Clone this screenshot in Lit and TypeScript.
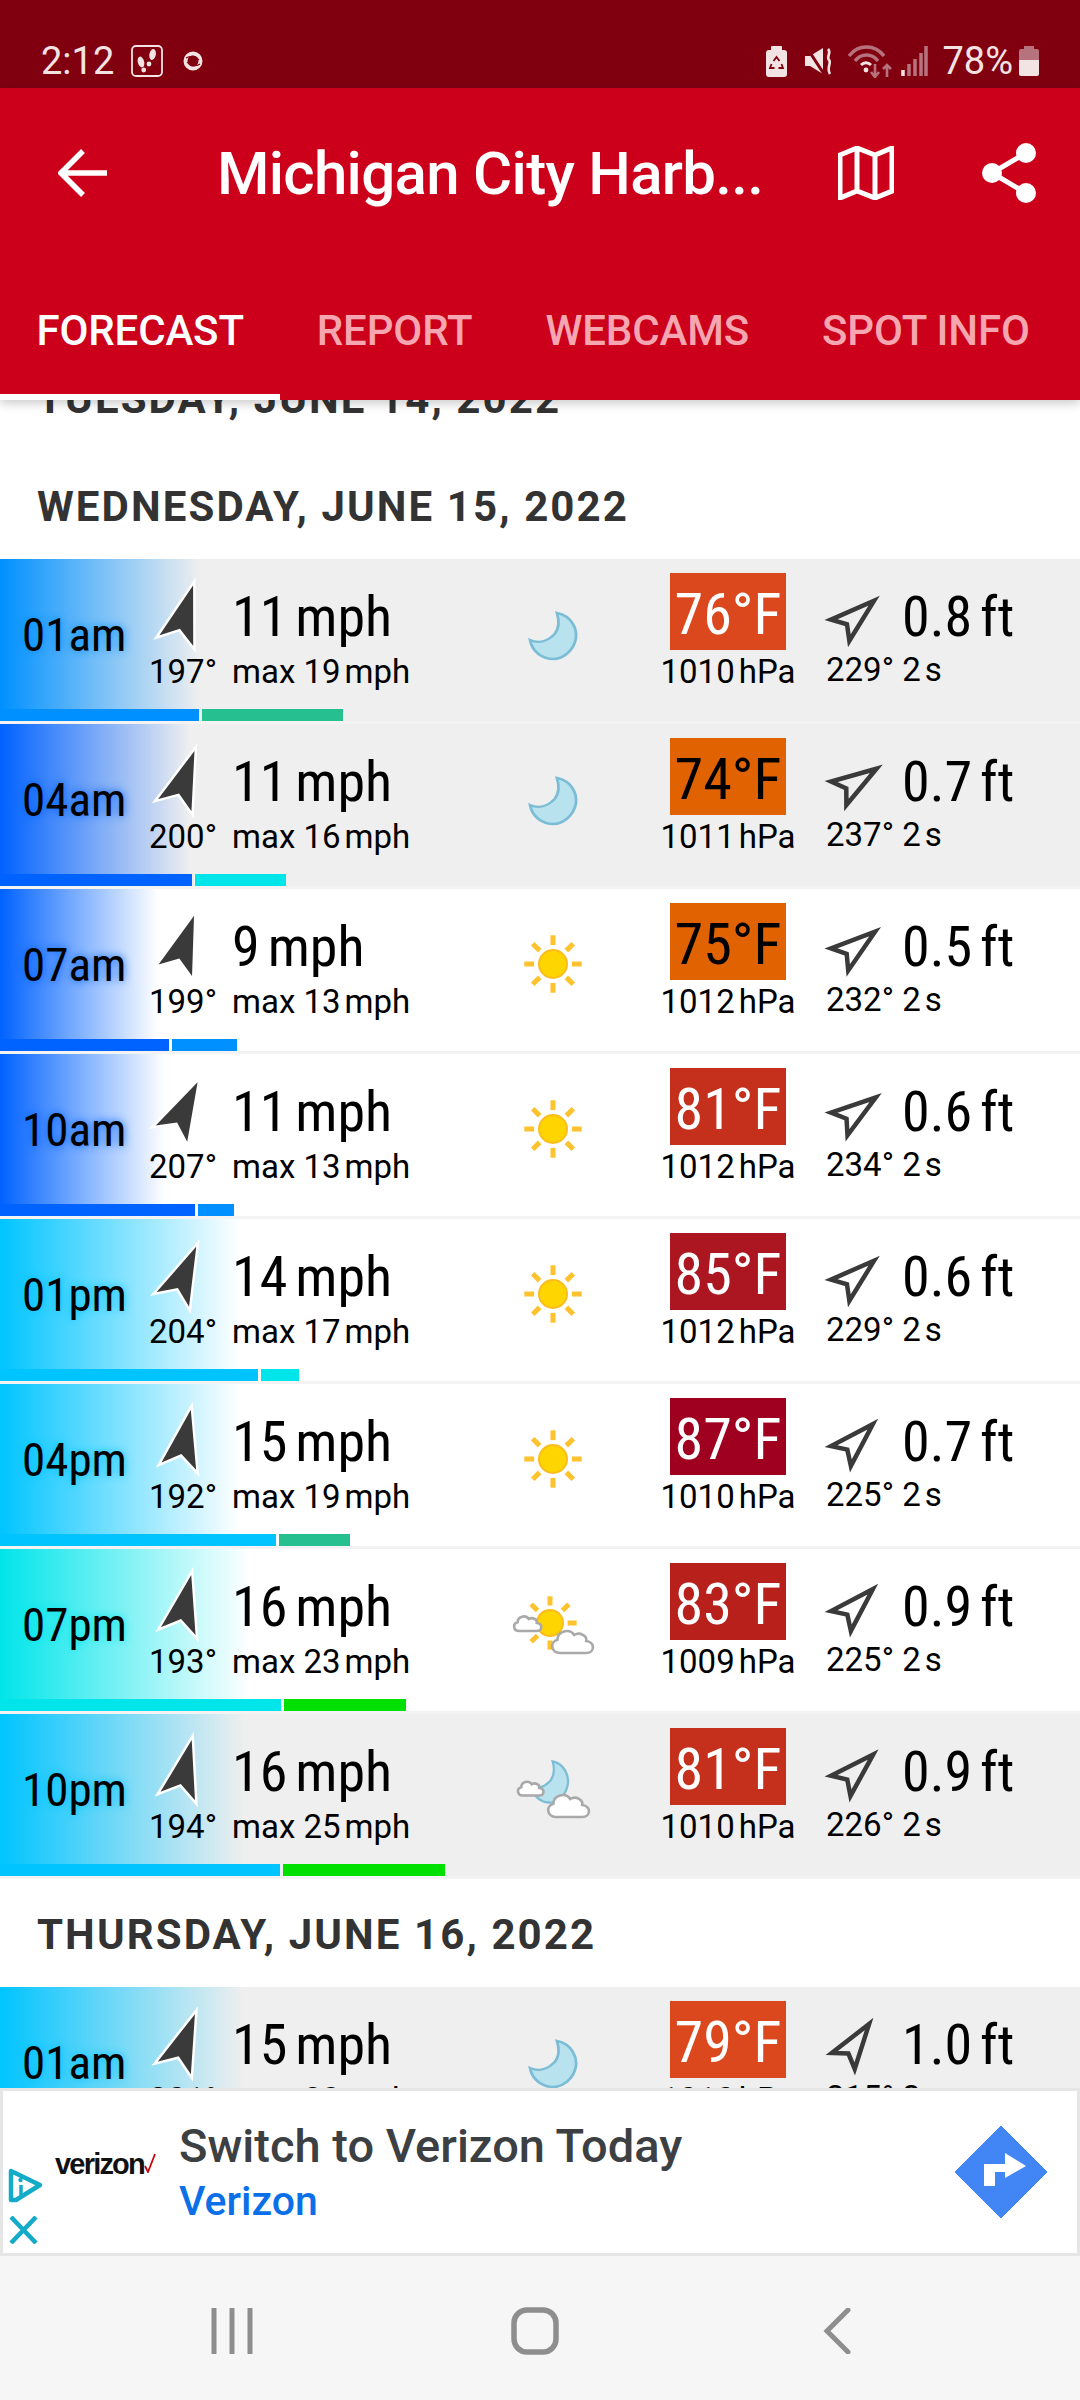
import { LitElement, html, svg, css } from 'lit';
import { customElement } from 'lit/decorators.js';

type Sky = 'moon' | 'sun' | 'sun-cloud' | 'moon-cloud';

interface Row {
  time: string;
  dir: number;
  speed: number;
  gust: number;
  sky: Sky;
  temp: number;
  tempBg: string;
  tempDark?: boolean;
  hpa: number;
  wave: string;
  waveDir: number;
  period: number;
  color: string;
  gustColor: string;
  bar: number;
  gustEnd: number;
  fade: number;
  grey?: boolean;
}

const BLUE = '#0090ff';
const DEEP = '#0062ff';
const SKY = '#00c4ff';
const AQUA = '#00e5ea';
const TEAL = '#26bf8f';
const GREEN = '#00e000';

const WEDNESDAY: Row[] = [
  { time: '01am', dir: 197, speed: 11, gust: 19, sky: 'moon', temp: 76, tempBg: '#db481d', hpa: 1010, wave: '0.8', waveDir: 229, period: 2, color: BLUE, gustColor: TEAL, bar: 199, gustEnd: 343, fade: 200, grey: true },
  { time: '04am', dir: 200, speed: 11, gust: 16, sky: 'moon', temp: 74, tempBg: '#e16200', tempDark: true, hpa: 1011, wave: '0.7', waveDir: 237, period: 2, color: DEEP, gustColor: AQUA, bar: 192, gustEnd: 286, fade: 190, grey: true },
  { time: '07am', dir: 199, speed: 9, gust: 13, sky: 'sun', temp: 75, tempBg: '#e16200', tempDark: true, hpa: 1012, wave: '0.5', waveDir: 232, period: 2, color: DEEP, gustColor: BLUE, bar: 169, gustEnd: 237, fade: 158, grey: false },
  { time: '10am', dir: 207, speed: 11, gust: 13, sky: 'sun', temp: 81, tempBg: '#c4301c', hpa: 1012, wave: '0.6', waveDir: 234, period: 2, color: DEEP, gustColor: BLUE, bar: 195, gustEnd: 234, fade: 165, grey: false },
  { time: '01pm', dir: 204, speed: 14, gust: 17, sky: 'sun', temp: 85, tempBg: '#ac1620', hpa: 1012, wave: '0.6', waveDir: 229, period: 2, color: SKY, gustColor: AQUA, bar: 258, gustEnd: 299, fade: 240, grey: false },
  { time: '04pm', dir: 192, speed: 15, gust: 19, sky: 'sun', temp: 87, tempBg: '#a00020', hpa: 1010, wave: '0.7', waveDir: 225, period: 2, color: SKY, gustColor: TEAL, bar: 276, gustEnd: 350, fade: 240, grey: false },
  { time: '07pm', dir: 193, speed: 16, gust: 23, sky: 'sun-cloud', temp: 83, tempBg: '#b8201c', hpa: 1009, wave: '0.9', waveDir: 225, period: 2, color: AQUA, gustColor: GREEN, bar: 281, gustEnd: 406, fade: 250, grey: false },
  { time: '10pm', dir: 194, speed: 16, gust: 25, sky: 'moon-cloud', temp: 81, tempBg: '#c4301c', hpa: 1010, wave: '0.9', waveDir: 226, period: 2, color: SKY, gustColor: GREEN, bar: 280, gustEnd: 445, fade: 245, grey: true },
];

const THURSDAY: Row[] = [
  { time: '01am', dir: 201, speed: 15, gust: 23, sky: 'moon', temp: 79, tempBg: '#db481d', hpa: 1010, wave: '1.0', waveDir: 215, period: 3, color: SKY, gustColor: GREEN, bar: 276, gustEnd: 400, fade: 244, grey: true },
];

const MOON_PATH = 'M44 17C58 20 62 34 61 42C59 56 48 63 41 63C31 63 22 56 20 44C28 48 36 45 42 38C47 31 46 24 44 17Z';

function moon(transform: string) {
  return svg`<path transform=${transform} d=${MOON_PATH} fill="#b9e2ef" stroke="#7cbdd6" stroke-width="2.5"/>`;
}

function sun(cx: number, cy: number, r: number) {
  const rays = [0, 45, 90, 135, 180, 225, 270, 315];
  return svg`
    ${rays.map(
      (a) => svg`<rect x=${cx - 2.5} y=${cy - r * 2.05} width="5" height=${r * 0.7} fill="#fdc22d" transform="rotate(${a} ${cx} ${cy})"/>`
    )}
    <circle cx=${cx} cy=${cy} r=${r} fill="#ffd500" stroke="#fbbc1e" stroke-width="2"/>`;
}

function cloud(x: number, y: number, scale: number) {
  return svg`<path transform="translate(${x} ${y}) scale(${scale})" d="M-11 10C-18 10 -20 1 -13 -1C-13 -8 -3 -11 1 -5C6 -8 12 -4 11 0C19 1 18 10 11 10Z" fill="#fff" stroke="#a9a9a9" stroke-width=${2.6 / scale}/>`;
}

function skyIcon(kind: Sky) {
  let body;
  if (kind === 'moon') body = moon('translate(50 40) scale(1.12 1) translate(-40.5 -40)');
  else if (kind === 'sun') body = sun(50, 38, 14);
  else if (kind === 'sun-cloud') body = svg`${sun(47, 37, 13)}${cloud(25, 37, 0.8)}${cloud(70, 55, 1.2)}`;
  else body = svg`${moon('translate(10 -5) scale(.9)')}${cloud(28, 37, 0.75)}${cloud(66, 54, 1.2)}`;
  return html`<svg class="sky" viewBox="0 0 100 80" width="100" height="80">${body}</svg>`;
}

@customElement('app-root')
export class AppRoot extends LitElement {
  static styles = css`
    :host {
      display: flex;
      flex-direction: column;
      width: 1080px;
      height: 2400px;
      overflow: hidden;
      background: #fff;
      font-family: Roboto, 'Noto Sans', sans-serif;
      color: #000;
    }

    .narrow { font-stretch: 75%; }

    .status {
      height: 88px;
      flex: none;
      box-sizing: border-box;
      background: #800010;
      color: #f3e4e4;
      display: flex;
      align-items: center;
      padding: 34px 41px 0 41px;
      font-size: 38px;
      line-height: 44px;
    }
    .status svg { display: block; flex: none; }
    .status .left { display: flex; align-items: center; }
    .status .right { margin-left: auto; display: flex; align-items: center; }
    .foot { margin-left: 17px; }
    .ring { margin-left: 20px; }
    .mute { margin-left: 18px; }
    .wifi { margin-left: 15px; }
    .bars-signal { margin-left: 9px; }
    .pct { margin-left: 14px; }
    .batt { margin-left: 6px; }

    .appbar {
      flex: none;
      height: 312px;
      background: #cc001b;
      color: #fff;
      display: flex;
      flex-direction: column;
      position: relative;
      z-index: 2;
      box-shadow: 0 3px 10px rgba(0, 0, 0, 0.22);
    }
    .toolbar {
      height: 170px;
      flex: none;
      display: flex;
      align-items: center;
      padding: 0 44px 0 58px;
      box-sizing: border-box;
    }
    .title {
      margin-left: 109px;
      font-size: 60px;
      font-weight: 500;
      letter-spacing: -0.7px;
      white-space: nowrap;
      width: 545px;
    }
    .toolbar .map { margin-left: 76px; flex: none; }
    .toolbar .share { margin-left: 88px; flex: none; }
    .tabs { display: flex; height: 142px; }
    .tab {
      padding: 48px 36.5px 0;
      font-size: 42px;
      line-height: 50px;
      font-weight: 500;
      letter-spacing: -0.15px;
      color: #f5a6b0;
      box-sizing: border-box;
      white-space: nowrap;
    }
    .tab.on { color: #fff; border-bottom: 6px solid #fff; }

    .list { flex: 1; min-height: 0; overflow: hidden; }
    .scroll { margin-top: -57px; }

    .day {
      height: 108px;
      box-sizing: border-box;
      padding: 31px 0 0 37px;
      font-size: 42px;
      line-height: 50px;
      font-weight: 700;
      letter-spacing: 2.1px;
      color: #333;
    }

    .row {
      height: 165px;
      box-sizing: border-box;
      border-bottom: 3px solid #f3f3f3;
      position: relative;
      display: grid;
      grid-template-columns: 150px 82px 244px 154px 196px 1fr;
      grid-template-rows: 77px 1fr;
      padding-top: 14px;
      background-repeat: no-repeat;
    }
    .row.grey { background-color: #efefef; }

    .time {
      grid-row: 1 / 3;
      align-self: center;
      margin-top: -24px;
      padding-left: 22px;
      font-size: 47px;
      line-height: 60px;
    }
    .dir { display: flex; align-items: center; }
    .dir svg { margin-left: -10px; flex: none; }
    .speed { font-size: 56px; line-height: 77px; padding-top: 6px; white-space: nowrap; }
    .unit { margin-left: 8px; }
    .sky-cell { grid-row: 1 / 3; grid-column: 4; align-self: center; justify-self: center; margin-top: -22px; }
    .sky { display: block; }
    .temp {
      grid-column: 5;
      justify-self: center;
      width: 116px;
      height: 77px;
      text-align: center;
      font-size: 58px;
      line-height: 77px;
      padding-top: 3px;
      box-sizing: border-box;
      color: #fff;
    }
    .temp.dark { color: #000; }
    .wave { grid-column: 6; display: flex; align-items: center; font-size: 56px; white-space: nowrap; }
    .wave svg { margin-left: -3px; margin-top: 14px; flex: none; }
    .wave .height { margin-left: 19px; padding-top: 10px; }
    .wave .ft { margin-left: 8px; }
    .sub {
      font-size: 33px;
      line-height: 40px;
      margin-top: 2px;
      white-space: nowrap;
    }
    .sub.center { text-align: center; grid-column: 5; }
    .sub.dir-text { grid-column: 2; margin-left: -1px; }
    .sub.max { grid-column: 3; }
    .sub.wave-text { grid-column: 6; margin-top: 0; }
    .thin { margin-left: 4px; }

    .bars {
      position: absolute;
      left: 0;
      bottom: 0;
      height: 12px;
      display: flex;
      gap: 3px;
    }
    .bars i { display: block; height: 12px; }

    .ad {
      flex: none;
      height: 168px;
      box-sizing: border-box;
      border: 3px solid #e6e6e6;
      background: #fff;
      display: flex;
      position: relative;
      z-index: 1;
    }
    .adchoice {
      width: 52px;
      flex: none;
      display: flex;
      flex-direction: column;
      justify-content: flex-end;
      padding: 0 0 9px 5px;
      box-sizing: border-box;
      gap: 12px;
    }
    .vz {
      width: 124px;
      flex: none;
      padding-top: 57px;
      box-sizing: border-box;
      display: flex;
      font-family: 'Liberation Sans', Arial, sans-serif;
      font-size: 29px;
      font-weight: 700;
      letter-spacing: -1.8px;
      color: #111;
    }
    .vz svg { margin-top: 5px; flex: none; }
    .adtext { flex: 1; padding-top: 27px; white-space: nowrap; }
    .adtitle { font-size: 47px; line-height: 56px; font-weight: 500; color: #3c4043; }
    .adsub { font-size: 41px; line-height: 48px; font-weight: 500; color: #0b6fe8; margin-top: 3px; }
    .go { margin-right: 30px; align-self: center; flex: none; }

    .nav {
      flex: none;
      height: 144px;
      background: #f6f6f6;
      display: flex;
      align-items: center;
      padding-top: 6px;
      box-sizing: border-box;
    }
    .nav .a { margin-left: 209px; }
    .nav .b { margin-left: 256px; }
    .nav .c { margin-left: 264px; }
  `;

  private renderRow(r: Row) {
    const bg = `linear-gradient(to right, ${r.color}, ${r.color}00)`;
    return html`
      <div
        class="row ${r.grey ? 'grey' : ''}"
        style="background-image:${bg};background-size:${r.fade}px 150px"
      >
        <div class="time narrow" style="text-shadow:0 0 8px ${r.color}">${r.time}</div>
        <div class="dir">
          <svg viewBox="-45 -45 90 90" width="90" height="90">
            <path
              d="M0 -32L20 33L0 19L-20 33Z"
              transform="rotate(${r.dir - 180})"
              fill="#3a3a3a"
              stroke="#fff"
              stroke-width="2.5"
            />
          </svg>
        </div>
        <div class="speed narrow">${r.speed}<span class="unit">mph</span></div>
        <div class="sky-cell">${skyIcon(r.sky)}</div>
        <div class="temp narrow ${r.tempDark ? 'dark' : ''}" style="background:${r.tempBg}">${r.temp}°F</div>
        <div class="wave narrow">
          <svg viewBox="-30 -40 60 80" width="60" height="80">
            <path
              d="M0 -28L14 17L0 8L-14 17Z"
              transform="rotate(${r.waveDir - 180})"
              fill="none"
              stroke="#3a3a3a"
              stroke-width="4.5"
            />
          </svg>
          <span class="height">${r.wave}<span class="ft">ft</span></span>
        </div>
        <div class="sub dir-text">${r.dir}°</div>
        <div class="sub max">max ${r.gust}<span class="thin">mph</span></div>
        <div class="sub center">${r.hpa}<span class="thin">hPa</span></div>
        <div class="sub wave-text">${r.waveDir}° ${r.period}<span class="thin">s</span></div>
        <div class="bars">
          <i style="width:${r.bar}px;background:${r.color}"></i>
          <i style="width:${r.gustEnd - r.bar - 3}px;background:${r.gustColor}"></i>
        </div>
      </div>
    `;
  }

  render() {
    return html`
      <div class="status">
        <div class="left">
          <span>2:12</span>
          <svg class="foot" width="32" height="32" viewBox="0 0 32 32">
            <rect x="1" y="1" width="30" height="30" rx="4" fill="none" stroke="#f3e4e4" stroke-width="1.8"/>
            <ellipse cx="10" cy="17" rx="3.2" ry="5.5" transform="rotate(-15 10 17)" fill="#f3e4e4"/>
            <circle cx="12.7" cy="25" r="2.4" fill="#f3e4e4"/>
            <ellipse cx="21.6" cy="9.5" rx="3.2" ry="5.5" transform="rotate(12 21.6 9.5)" fill="#f3e4e4"/>
            <circle cx="18" cy="19" r="2.4" fill="#f3e4e4"/>
          </svg>
          <svg class="ring" width="20" height="20" viewBox="0 0 20 20">
            <circle cx="10" cy="10" r="7.5" fill="none" stroke="#f3e4e4" stroke-width="4"/>
            <path d="M3 7C8 4 13 5 16 9M17 13C12 16 7 15 4 11" fill="none" stroke="#800010" stroke-width="1.2"/>
          </svg>
        </div>
        <div class="right">
          <svg width="21" height="31" viewBox="0 0 21 31">
            <rect x="0" y="4" width="21" height="27" rx="3" fill="#f3e4e4"/>
            <rect x="5" y="0" width="11" height="5" rx="1" fill="#f3e4e4"/>
            <path d="M7.5 15L10.5 11L13.5 15M15.5 18L17 22H12.5M8.5 22H4L5.5 18" fill="none" stroke="#800010" stroke-width="1.8"/>
          </svg>
          <svg class="mute" width="28" height="27" viewBox="0 0 28 27">
            <path d="M0 8H5L18 0V26L5 18H0Z" fill="#f3e4e4"/>
            <path d="M2 0L19 26" stroke="#800010" stroke-width="3"/>
            <path d="M23 1C27 5 21 8 24 12C27 15 21 19 25 26" fill="none" stroke="#f3e4e4" stroke-width="2.6"/>
          </svg>
          <svg class="wifi" width="44" height="34" viewBox="0 0 44 34">
            <path d="M1 12C10 0 27 0 36 12M7 17C13 9 24 9 30 17" fill="none" stroke="#b7737d" stroke-width="3.5"/>
            <path d="M13 21C16 18 20 18 23 21" fill="none" stroke="#f3e4e4" stroke-width="3"/>
            <circle cx="18" cy="26" r="2.4" fill="#f3e4e4"/>
            <path d="M27 20V33M23 28L27 33L31 28M39 21V33M35 25L39 21L43 25" fill="none" stroke="#b7737d" stroke-width="2.6"/>
          </svg>
          <svg class="bars-signal" width="27" height="30" viewBox="0 0 27 30">
            <path d="M2 30V24" stroke="#f3e4e4" stroke-width="3.5"/>
            <path d="M8 30V18M14 30V13M20 30V7M25 30V0" stroke="#b7737d" stroke-width="3.5"/>
          </svg>
          <span class="pct">78%</span>
          <svg class="batt" width="20" height="30" viewBox="0 0 20 30">
            <path d="M5 0H15V3H18Q20 3 20 5V14H0V5Q0 3 2 3H5Z" fill="#b7737d"/>
            <path d="M0 14H20V28Q20 30 18 30H2Q0 30 0 28Z" fill="#f3e4e4"/>
          </svg>
        </div>
      </div>

      <div class="appbar">
        <div class="toolbar">
          <svg width="50" height="48" viewBox="0 0 50 48" style="flex:none">
            <path d="M25 2L3 24L25 46M3 24H49" fill="none" stroke="#fff" stroke-width="5.5"/>
          </svg>
          <div class="title">Michigan City Harb...</div>
          <svg class="map" width="56" height="54" viewBox="0 0 56 54">
            <path d="M2 9L19 2L37 9L54 2V45L37 52L19 45L2 52ZM19 2V45M37 9V52" fill="none" stroke="#fff" stroke-width="5"/>
          </svg>
          <svg class="share" width="54" height="60" viewBox="0 0 54 60">
            <path d="M44 10L10 30L44 50" fill="none" stroke="#fff" stroke-width="5"/>
            <circle cx="44" cy="10" r="10" fill="#fff"/>
            <circle cx="10" cy="30" r="10" fill="#fff"/>
            <circle cx="44" cy="50" r="10" fill="#fff"/>
          </svg>
        </div>
        <div class="tabs">
          <div class="tab on">FORECAST</div>
          <div class="tab">REPORT</div>
          <div class="tab">WEBCAMS</div>
          <div class="tab">SPOT INFO</div>
        </div>
      </div>

      <div class="list">
        <div class="scroll">
          <div class="day">TUESDAY, JUNE 14, 2022</div>
          <div class="day">WEDNESDAY, JUNE 15, 2022</div>
          ${WEDNESDAY.map((r) => this.renderRow(r))}
          <div class="day">THURSDAY, JUNE 16, 2022</div>
          ${THURSDAY.map((r) => this.renderRow(r))}
        </div>
      </div>

      <div class="ad">
        <div class="adchoice">
          <svg width="36" height="36" viewBox="0 0 36 36">
            <path d="M3 3L32 17L8 32L3 32Z" fill="none" stroke="#14abc9" stroke-width="4.5" stroke-linejoin="round"/>
            <circle cx="12.5" cy="12" r="2.2" fill="#14abc9"/>
            <path d="M13 17V27" stroke="#14abc9" stroke-width="3.5"/>
          </svg>
          <svg width="30" height="28" viewBox="0 0 30 28">
            <path d="M3 1L28 27M28 1L3 27" stroke="#14abc9" stroke-width="4.5"/>
          </svg>
        </div>
        <div class="vz">
          verizon
          <svg width="12" height="20" viewBox="0 0 12 20">
            <path d="M1 13L4 19L11 1" fill="none" stroke="#cd040b" stroke-width="1.8"/>
          </svg>
        </div>
        <div class="adtext">
          <div class="adtitle">Switch to Verizon Today</div>
          <div class="adsub">Verizon</div>
        </div>
        <svg class="go" width="92" height="92" viewBox="0 0 92 92">
          <path d="M46 0L92 46L46 92L0 46Z" fill="#4285f4" stroke="#4285f4" stroke-linejoin="round"/>
          <path d="M29 60V38H50V27L71 40L50 52V46H40V60Z" fill="#fff"/>
        </svg>
      </div>

      <div class="nav">
        <svg class="a" width="46" height="46" viewBox="0 0 46 46">
          <path d="M5 1V45M23 1V45M41 1V45" stroke="#8e8e8e" stroke-width="5" stroke-linecap="round"/>
        </svg>
        <svg class="b" width="48" height="48" viewBox="0 0 48 48">
          <rect x="3" y="3" width="42" height="42" rx="13" fill="none" stroke="#8e8e8e" stroke-width="5.5"/>
        </svg>
        <svg class="c" width="28" height="46" viewBox="0 0 28 46">
          <path d="M25 2L4 23L25 44" fill="none" stroke="#8e8e8e" stroke-width="5" stroke-linecap="round"/>
        </svg>
      </div>
    `;
  }
}

declare global {
  interface HTMLElementTagNameMap {
    'app-root': AppRoot;
  }
}
